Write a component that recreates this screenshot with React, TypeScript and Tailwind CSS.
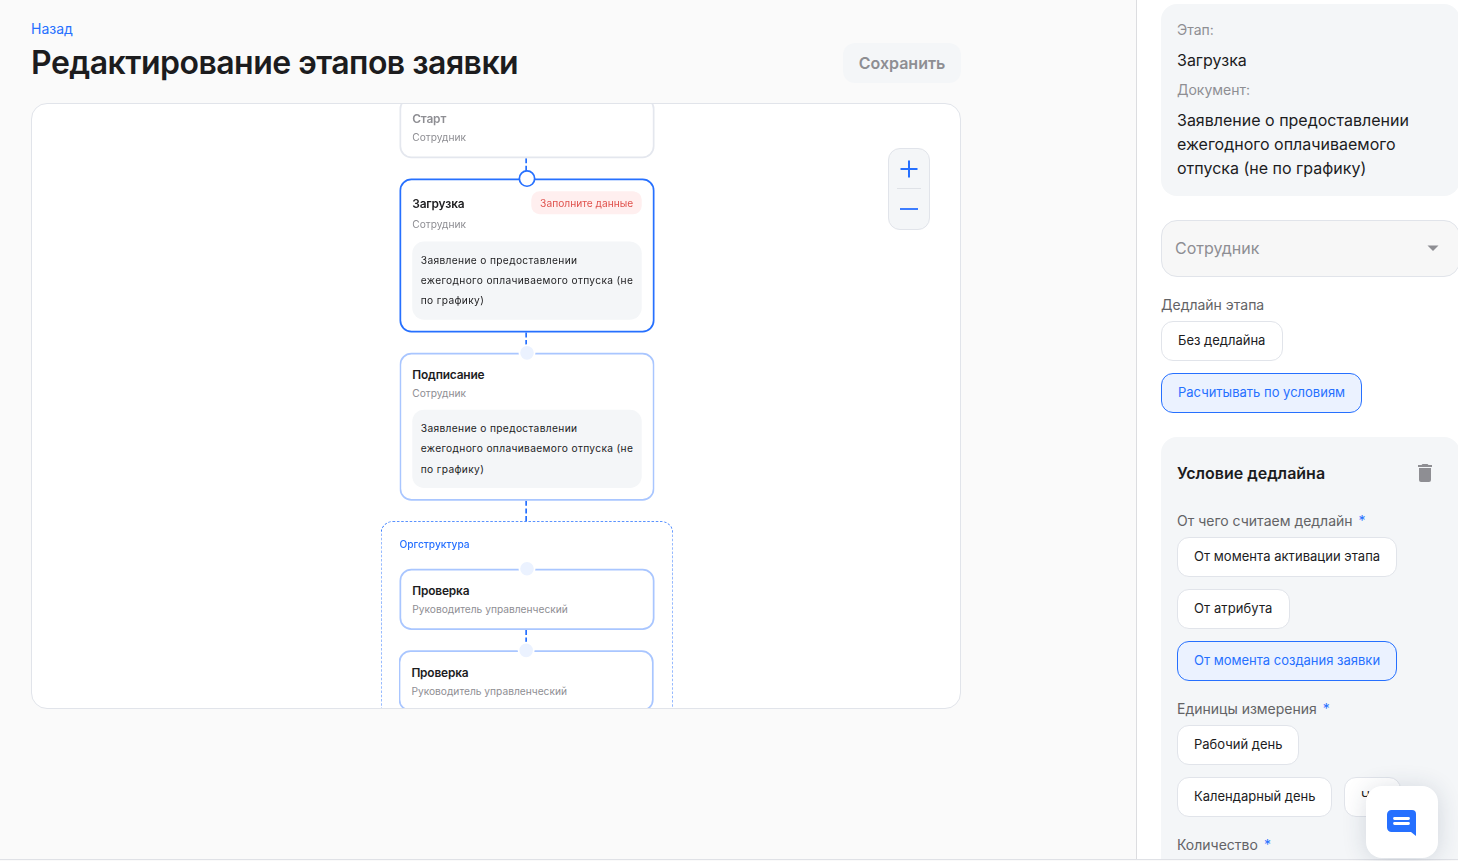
import type { ReactNode } from 'react';
import clsx from 'clsx';

const DOCUMENT = 'Заявление о предоставлении ежегодного оплачиваемого отпуска (не по графику)';

function Connector() {
  return <div className="ml-[148px] h-6 w-0 border-l-2 border-dashed border-[#2670ff]" />;
}

type StageProps = {
  title: string;
  role: string;
  document?: string;
  badge?: string;
  state?: 'default' | 'active' | 'disabled';
  className?: string;
};

function Stage({ title, role, document, badge, state = 'default', className }: StageProps) {
  return (
    <div
      className={clsx(
        'relative w-[300px] rounded-[14px] border-2 bg-white p-[13px]',
        state === 'default' && 'border-[#a9c6ff]',
        state === 'active' && 'border-[#2670ff]',
        state === 'disabled' && 'border-[#e4e7ee]',
        className
      )}
    >
      {state !== 'disabled' && (
        <span
          className={clsx(
            'absolute -top-3 left-1/2 size-5 -translate-x-1/2 rounded-full border-2',
            state === 'active' ? 'border-[#2670ff] bg-white' : 'border-white bg-[#ebf2ff]'
          )}
        />
      )}
      <div className="flex items-center justify-between">
        <h3
          className={clsx(
            'text-[14px] leading-[21px] font-semibold tracking-[-0.2px]',
            state === 'disabled' ? 'text-[#8e8e93]' : 'text-[#1c1c1e]'
          )}
        >
          {title}
        </h3>
        {badge && (
          <span className="flex h-[27px] items-center rounded-[10px] bg-[#ffefef] px-[10px] text-[12px] text-[#e0524d]">
            {badge}
          </span>
        )}
      </div>
      <p className="mt-[3px] text-[12px] leading-[18px] text-[#8e8e93]">{role}</p>
      {document && (
        <p className="mt-[10.5px] rounded-[14px] bg-[#f4f6f8] py-[10px] pr-2 pl-[10px] text-[12px] leading-6 tracking-[0.4px] text-[#1c1c1e]">
          {document}
        </p>
      )}
    </div>
  );
}

function Chip({ children, selected, className }: { children: ReactNode; selected?: boolean; className?: string }) {
  return (
    <button
      type="button"
      className={clsx(
        'h-10 rounded-xl border pl-4 text-left text-[13px] whitespace-nowrap',
        selected ? 'border-[#2670ff] bg-[#ebf2ff] text-[#2670ff]' : 'border-[#e1e4ea] bg-white text-[#1c1c1e]',
        className
      )}
    >
      {children}
    </button>
  );
}

function Field({ label, required, children }: { label: string; required?: boolean; children?: ReactNode }) {
  return (
    <div className="mt-4">
      <div className="text-[14px] leading-6 text-[#636366]">
        {label}
        {required && <span className="ml-1.5 text-[#2670ff]">*</span>}
      </div>
      <div className="mt-1 flex flex-wrap gap-3">{children}</div>
    </div>
  );
}

function Canvas() {
  return (
    <section className="mt-5 flex h-[606px] w-[930px] items-start overflow-hidden rounded-2xl border border-[#e1e4ea] bg-white">
      <div className="-mt-[7px] ml-[323px] w-[344px] shrink-0 origin-top scale-[0.85]">
        <div className="px-[22px]">
          <Stage title="Старт" role="Сотрудник" state="disabled" />
          <Connector />
          <Stage title="Загрузка" role="Сотрудник" badge="Заполните данные" document={DOCUMENT} state="active" />
          <Connector />
          <Stage title="Подписание" role="Сотрудник" document={DOCUMENT} />
          <Connector />
        </div>
        <div className="h-[280px] rounded-[14px] border border-dashed border-[#2670ff] px-[21px] pt-[18px]">
          <div className="mb-[19px] text-[12px] leading-[18px] font-medium text-[#2670ff]">Оргструктура</div>
          <Stage title="Проверка" role="Руководитель управленческий" />
          <Connector />
          <Stage title="Проверка" role="Руководитель управленческий" className="-ml-px" />
        </div>
      </div>
      <div className="mt-11 ml-[189px] flex h-[82px] w-[42px] shrink-0 flex-col items-center rounded-xl border border-[#e1e4ea] bg-[#f4f6f8]">
        <button type="button" aria-label="Увеличить" className="flex h-[39px] w-full items-center justify-center">
          <svg width="18" height="18" viewBox="0 0 18 18" fill="none" stroke="#2670ff" strokeWidth="2">
            <path d="M0.5 9h17M9 0.5v17" />
          </svg>
        </button>
        <div className="h-px w-6 bg-[#dfe2e7]" />
        <button type="button" aria-label="Уменьшить" className="flex h-10 w-full items-center justify-center">
          <svg width="18" height="18" viewBox="0 0 18 18" fill="none" stroke="#3d7dff" strokeWidth="2">
            <path d="M0 9h18" />
          </svg>
        </button>
      </div>
    </section>
  );
}

function Sidebar() {
  return (
    <aside className="h-[859px] w-[322px] shrink-0 overflow-hidden border-l border-[#dcdde0] bg-white pt-1 pl-6">
      <div className="w-[299px]">
        <div className="rounded-2xl bg-[#f4f6f8] p-4 text-[16px] leading-6 text-[#1c1c1e]">
          <div className="text-[14px] leading-5 text-[#8e8e93]">Этап:</div>
          <div className="mt-2">Загрузка</div>
          <div className="mt-2 text-[14px] leading-5 text-[#8e8e93]">Документ:</div>
          <div className="mt-2">{DOCUMENT}</div>
        </div>

        <div className="mt-6 flex h-[57px] items-center justify-between rounded-2xl border border-[#e1e4ea] bg-[#f7f7f7] pr-5 pb-px pl-[13px] text-[16px] text-[#8e8e93]">
          Сотрудник
          <svg width="12" height="6" viewBox="0 0 12 6" fill="#8e8e93">
            <path d="M0.5 0.5h11L6 6z" />
          </svg>
        </div>

        <Field label="Дедлайн этапа">
          <Chip className="w-[122px]">Без дедлайна</Chip>
          <Chip selected className="w-[201px]">
            Расчитывать по условиям
          </Chip>
        </Field>

        <div className="mt-6 h-[500px] rounded-2xl bg-[#f4f6f8] p-4">
          <div className="flex h-10 items-center justify-between pr-3">
            <h2 className="text-[16px] font-semibold text-[#1c1c1e]">Условие дедлайна</h2>
            <svg width="14" height="18" viewBox="0 0 14 18" fill="#8e8e93">
              <path d="M1 16a2 2 0 0 0 2 2h8a2 2 0 0 0 2-2V4H1v12zM14 1h-3.5l-1-1h-5l-1 1H0v2h14V1z" />
            </svg>
          </div>
          <Field label="От чего считаем дедлайн" required>
            <Chip className="w-[220px] tracking-[0.04px]">От момента активации этапа</Chip>
            <Chip className="w-[113px] tracking-[0.1px]">От атрибута</Chip>
            <Chip selected className="w-[220px]">
              От момента создания заявки
            </Chip>
          </Field>
          <Field label="Единицы измерения" required>
            <div className="w-full">
              <Chip className="w-[122px]">Рабочий день</Chip>
            </div>
            <Chip className="w-[155px]">Календарный день</Chip>
            <Chip className="w-[57px]">Час</Chip>
          </Field>
          <Field label="Количество" required />
        </div>
      </div>
    </aside>
  );
}

function ChatButton() {
  return (
    <button
      type="button"
      aria-label="Чат"
      className="fixed right-5 bottom-[3px] flex size-[72px] items-center justify-center rounded-2xl bg-white pt-0.5 shadow-[0_2px_24px_rgba(30,50,80,0.16)]"
    >
      <svg width="30" height="26" viewBox="0 0 30 26">
        <path d="M4.500 0h20.500a4 4 0 0 1 4 4v22l-5-4H4.500a4.500 4.500 0 0 1-4.500-4.500V4.500A4.500 4.500 0 0 1 4.500 0z" fill="#2670ff" />
        <path d="M7.500 8.500h14M7.500 13.500h14" stroke="#fff" strokeWidth="2.800" strokeLinecap="round" />
      </svg>
    </button>
  );
}

export default function App() {
  return (
    <div className="h-[861px] w-[1458px] overflow-hidden bg-[#fafafa] font-['Inter',sans-serif]">
      <div className="flex h-[860px] border-b border-[#dfe1e6]">
        <main className="w-[1136px] shrink-0 pt-[19px] pl-[31px]">
          <a href="#" className="block text-[14px] leading-5 text-[#2670ff]">
            Назад
          </a>
          <div className="mt-1 flex h-10 w-[930px] items-center justify-between">
            <h1 className="text-[32px] leading-10 font-semibold tracking-[-0.52px] text-[#1c1c1e]">
              Редактирование этапов заявки
            </h1>
            <button
              type="button"
              className="h-10 w-[118px] rounded-xl bg-[#f4f6f8] text-[16px] font-semibold text-[#8e8e93]"
            >
              Сохранить
            </button>
          </div>
          <Canvas />
        </main>
        <Sidebar />
      </div>
      <ChatButton />
    </div>
  );
}
